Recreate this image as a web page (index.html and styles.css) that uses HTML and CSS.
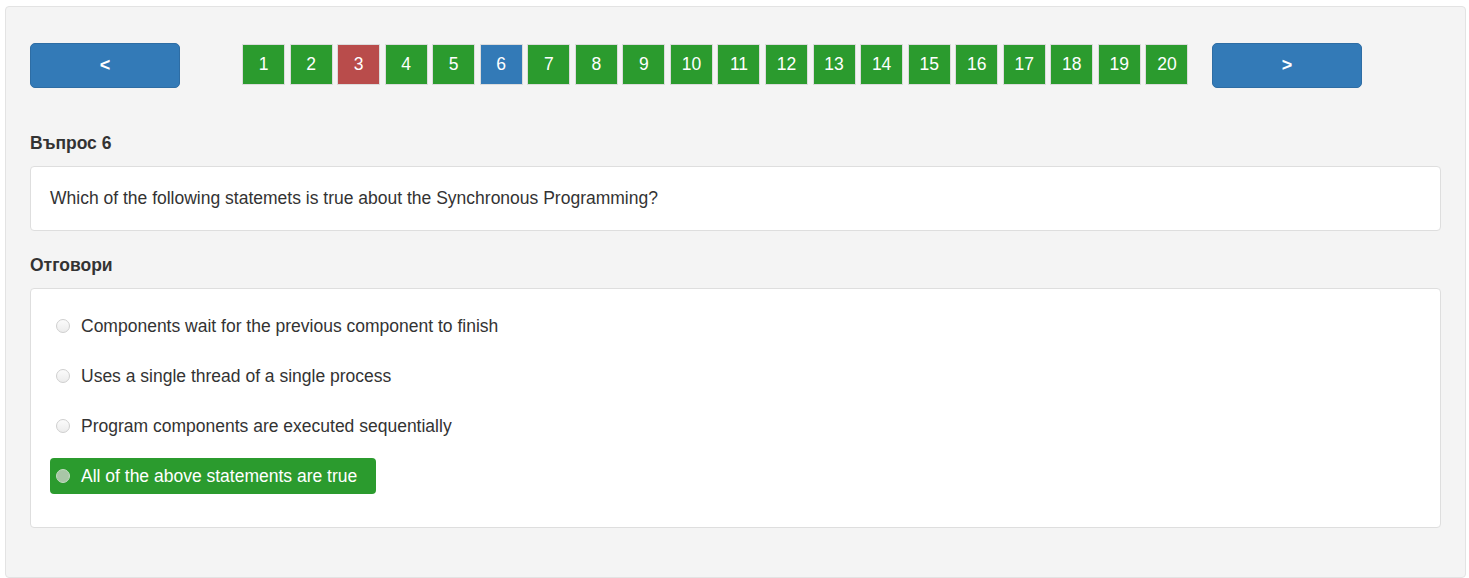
FILE: index.html
```html
<!DOCTYPE html>
<html>
<head>
<meta charset="utf-8">
<link rel="stylesheet" href="styles.css">
</head>
<body>
<div class="well">
  <div class="nav">
    <button class="nav-btn">&lt;</button>
    <div class="pages">
      <span class="page ok">1</span>
      <span class="page ok">2</span>
      <span class="page bad">3</span>
      <span class="page ok">4</span>
      <span class="page ok">5</span>
      <span class="page cur">6</span>
      <span class="page ok">7</span>
      <span class="page ok">8</span>
      <span class="page ok">9</span>
      <span class="page ok">10</span>
      <span class="page ok">11</span>
      <span class="page ok">12</span>
      <span class="page ok">13</span>
      <span class="page ok">14</span>
      <span class="page ok">15</span>
      <span class="page ok">16</span>
      <span class="page ok">17</span>
      <span class="page ok">18</span>
      <span class="page ok">19</span>
      <span class="page ok">20</span>
    </div>
    <button class="nav-btn next">&gt;</button>
  </div>

  <h4 class="label">Въпрос 6</h4>
  <div class="panel question">Which of the following statemets is true about the Synchronous Programming?</div>

  <h4 class="label">Отговори</h4>
  <div class="panel answers">
    <div class="answer"><span class="radio"></span><span>Components wait for the previous component to finish</span></div>
    <div class="answer"><span class="radio"></span><span>Uses a single thread of a single process</span></div>
    <div class="answer"><span class="radio"></span><span>Program components are executed sequentially</span></div>
    <div class="answer selected"><span class="radio"></span><span>All of the above statements are true</span></div>
  </div>
</div>
</body>
</html>
```

FILE: styles.css
```css
* { box-sizing: border-box; }
body {
  margin: 0;
  background: #fff;
  font-family: "Liberation Sans", Arial, sans-serif;
  color: #333;
}
.well {
  margin: 6px 0 0 5px;
  width: 1461px;
  height: 572px;
  background: #f4f4f4;
  border: 1px solid #e3e3e3;
  border-radius: 4px;
  padding: 36px 24px 0 24px;
}
.nav {
  display: flex;
  align-items: flex-start;
}
.nav-btn {
  width: 150px;
  height: 45px;
  background: #337ab7;
  border: 1px solid #2e6da4;
  border-radius: 5px;
  color: #fff;
  font-family: "Liberation Sans", Arial, sans-serif;
  font-size: 18px;
  font-weight: bold;
  padding: 0;
}
.nav-btn.next { margin-left: 23.5px; }
.pages {
  display: flex;
  gap: 4.55px;
  margin-left: 62px;
  margin-top: 1px;
}
.page {
  width: 43px;
  height: 41px;
  border: 1px solid #dcdcdc;
  color: #fff;
  font-size: 17.5px;
  display: flex;
  align-items: center;
  justify-content: center;
}
.page.ok { background: #2b9b2e; }
.page.bad { background: #b94c4b; }
.page.cur { background: #337ab7; }
.label {
  margin: 45px 0 13px 0;
  font-size: 17.5px;
  font-weight: bold;
  color: #333;
  line-height: 20px;
}
.panel {
  background: #fff;
  border: 1px solid #dedede;
  border-radius: 4px;
}
.question {
  height: 65px;
  padding: 0 19px;
  display: flex;
  align-items: center;
  font-size: 17.5px;
}
.question + .label { margin-top: 24px; }
.answers {
  padding: 19px 19px 33px 19px;
  display: flex;
  flex-direction: column;
  gap: 14px;
}
.answer {
  display: flex;
  align-items: center;
  height: 36px;
  padding-left: 6px;
  font-size: 17.5px;
  border-radius: 4px;
  align-self: flex-start;
  padding-right: 19px;
}
.radio {
  width: 14px;
  height: 14px;
  border-radius: 50%;
  border: 1px solid #cfcfcf;
  background: linear-gradient(#fbfbfb, #ececec);
  margin-right: 11px;
  flex: none;
}
.answer.selected {
  background: #2b9b2e;
  color: #fff;
}
.answer.selected .radio {
  background: #a9c6a7;
  border-color: #c4dcc3;
}
```
